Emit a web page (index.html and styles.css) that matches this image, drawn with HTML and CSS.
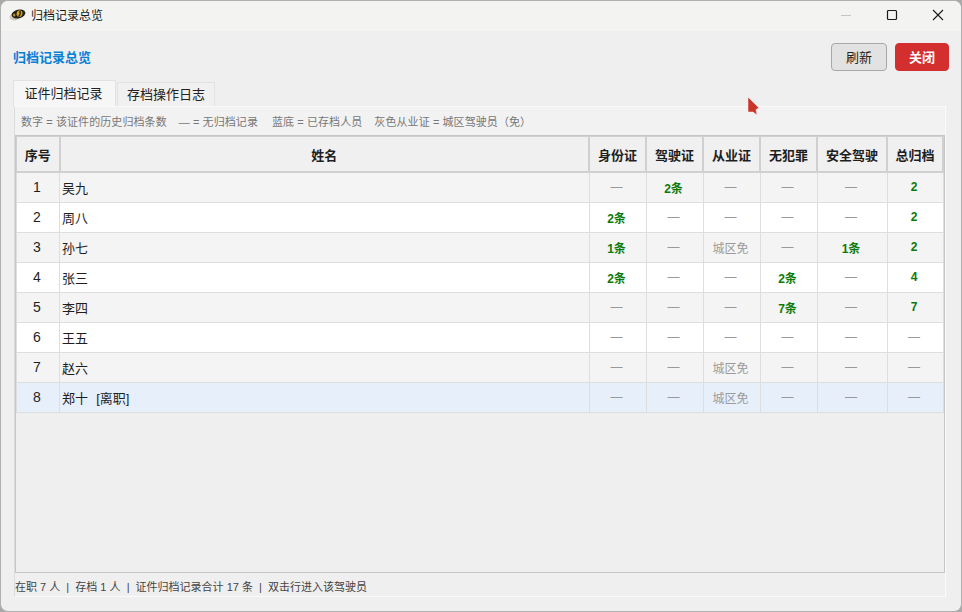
FILE: index.html
```html
<!DOCTYPE html>
<html lang="zh-CN">
<head>
    <meta charset="UTF-8">
    <title>归档记录总览</title>
    <link rel="stylesheet" href="styles.css">
</head>
<body>

<div class="window">
    <div class="titlebar">
        <svg class="app-icon" width="17" height="12" viewBox="0 0 17 12">
            <ellipse cx="6" cy="7.500" rx="5.500" ry="3.800" fill="#cfcbbf" transform="rotate(-15 6 7.500)"/>
            <ellipse cx="9.500" cy="5" rx="7" ry="4.300" fill="#23211c" transform="rotate(-15 9.500 5)"/>
            <ellipse cx="10.500" cy="4.600" rx="2.900" ry="3.300" fill="#d9a21e" transform="rotate(15 10.500 4.600)"/>
            <ellipse cx="5.200" cy="6" rx="1.300" ry="1.600" fill="#b58a24"/>
            <path d="M10.800 1.800c0.800 1.800 0.400 4-1.200 5.800" fill="none" stroke="#1d1a12" stroke-width="1.300"/>
        </svg>
        <span class="window-title">归档记录总览</span>
        <div class="window-controls">
            <svg width="12" height="12" viewBox="0 0 12 12"><path d="M1 6.500h10" stroke="#c4c4c4" stroke-width="1"/></svg>
            <svg width="12" height="12" viewBox="0 0 12 12"><rect x="1.500" y="1.500" width="9" height="9" rx="1" fill="none" stroke="#1a1a1a" stroke-width="1.200"/></svg>
            <svg width="12" height="12" viewBox="0 0 12 12"><path d="M1 1l10 10M11 1L1 11" stroke="#1a1a1a" stroke-width="1.100"/></svg>
        </div>
    </div>

    <div class="content">
        <div class="page-head">
            <h1>归档记录总览</h1>
            <div class="actions">
                <button class="btn">刷新</button>
                <button class="btn btn-close">关闭</button>
            </div>
        </div>

        <div class="tabs">
            <div class="tab active">证件归档记录</div>
            <div class="tab">存档操作日志</div>
        </div>

        <div class="pane">
            <div class="legend">
                <span>数字 = 该证件的历史归档条数</span>
                <span class="legend-nil">— = 无归档记录</span>
                <span>蓝底 = 已存档人员</span>
                <span>灰色从业证 = 城区驾驶员（免）</span>
            </div>

            <div class="table-box">
                <table>
                    <colgroup>
                        <col class="c-no"><col>
                        <col class="c-doc"><col class="c-doc"><col class="c-doc"><col class="c-doc">
                        <col class="c-safe"><col class="c-total">
                    </colgroup>
                    <thead>
                        <tr>
                            <th>序号</th><th>姓名</th><th>身份证</th><th>驾驶证</th>
                            <th>从业证</th><th>无犯罪</th><th>安全驾驶</th><th>总归档</th>
                        </tr>
                    </thead>
                    <tbody>
                        <tr class="odd">
                            <td class="no">1</td><td class="name">吴九</td>
                            <td class="nil">—</td><td class="num">2条</td><td class="nil">—</td><td class="nil">—</td><td class="nil">—</td><td class="num">2</td>
                        </tr>
                        <tr>
                            <td class="no">2</td><td class="name">周八</td>
                            <td class="num">2条</td><td class="nil">—</td><td class="nil">—</td><td class="nil">—</td><td class="nil">—</td><td class="num">2</td>
                        </tr>
                        <tr class="odd">
                            <td class="no">3</td><td class="name">孙七</td>
                            <td class="num">1条</td><td class="nil">—</td><td class="free">城区免</td><td class="nil">—</td><td class="num">1条</td><td class="num">2</td>
                        </tr>
                        <tr>
                            <td class="no">4</td><td class="name">张三</td>
                            <td class="num">2条</td><td class="nil">—</td><td class="nil">—</td><td class="num">2条</td><td class="nil">—</td><td class="num">4</td>
                        </tr>
                        <tr class="odd">
                            <td class="no">5</td><td class="name">李四</td>
                            <td class="nil">—</td><td class="nil">—</td><td class="nil">—</td><td class="num">7条</td><td class="nil">—</td><td class="num">7</td>
                        </tr>
                        <tr>
                            <td class="no">6</td><td class="name">王五</td>
                            <td class="nil">—</td><td class="nil">—</td><td class="nil">—</td><td class="nil">—</td><td class="nil">—</td><td class="nil">—</td>
                        </tr>
                        <tr class="odd">
                            <td class="no">7</td><td class="name">赵六</td>
                            <td class="nil">—</td><td class="nil">—</td><td class="free">城区免</td><td class="nil">—</td><td class="nil">—</td><td class="nil">—</td>
                        </tr>
                        <tr class="archived">
                            <td class="no">8</td><td class="name">郑十&nbsp; <span class="left-tag">[离职]</span></td>
                            <td class="nil">—</td><td class="nil">—</td><td class="free">城区免</td><td class="nil">—</td><td class="nil">—</td><td class="nil">—</td>
                        </tr>
                    </tbody>
                </table>
            </div>

            <div class="status">在职 7 人 &nbsp;|&nbsp; 存档 1 人 &nbsp;|&nbsp; 证件归档记录合计 17 条 &nbsp;|&nbsp; 双击行进入该驾驶员</div>
        </div>

        <svg class="cursor" width="14" height="20" viewBox="0 0 14 20">
            <path d="M1 1l11 11-3 1.500 1 5.500-4-3-5 0z" fill="#cb3527" stroke="#f4f4f4" stroke-width="0.500"/>
        </svg>
    </div>
</div>

</body>
</html>
```

FILE: styles.css
```css
html, body {
    margin: 0;
    height: 100%;
    background-color: #a9a9a9;
}
body {
    font-family: "Liberation Sans", "Noto Sans CJK SC", sans-serif;
    font-size: 12px;
    color: #1e1e1e;
    overflow: hidden;
}
.window {
    box-sizing: border-box;
    width: 962px;
    height: 612px;
    display: flex;
    flex-direction: column;
    background-color: #efefef;
    border: 1px solid #b0b0b0;
    border-radius: 8px;
    overflow: hidden;
}
.titlebar {
    box-sizing: border-box;
    display: flex;
    align-items: center;
    flex: 0 0 30px;
    padding: 0 0 3px 8px;
    background-color: #f3f3f1;
}
.app-icon {
    margin-right: 5px;
}
.window-title {
    font-size: 12px;
    color: #1a1a1a;
}
.window-controls {
    margin-left: auto;
    display: flex;
    gap: 34px;
    padding-right: 17px;
}
.content {
    position: relative;
    flex: 1;
    display: flex;
    flex-direction: column;
    padding: 12px 12px 14px 12px;
    min-height: 0;
}
.page-head {
    display: flex;
    justify-content: space-between;
    align-items: center;
    height: 28px;
}
.page-head h1 {
    margin: 0;
    padding-bottom: 2px;
    font-size: 13px;
    font-weight: bold;
    color: #0a7fd6;
}
.actions {
    display: flex;
    gap: 8px;
}
.btn {
    width: 56px;
    height: 28px;
    padding: 0 0 2px;
    font-family: inherit;
    font-size: 13px;
    color: #222;
    background-color: #e2e2e2;
    border: 1px solid #a8a8a8;
    border-radius: 4px;
}
.btn-close {
    width: 54px;
    font-weight: bold;
    color: #fff;
    background-color: #d32f2f;
    border-color: #d32f2f;
}
.tabs {
    display: flex;
    align-items: flex-end;
    gap: 1px;
    height: 26px;
    margin-top: 9px;
    position: relative;
    z-index: 1;
}
.tab {
    box-sizing: border-box;
    width: 98px;
    height: 24px;
    line-height: 23px;
    text-align: center;
    font-size: 13px;
    color: #222;
    background-color: #f0f0f0;
    border: 1px solid #e2e2e2;
    border-bottom: none;
}
.tab.active {
    width: 103px;
    height: 26px;
    padding-right: 2px;
    line-height: 25px;
    background-color: #f6f6f6;
}
.pane {
    flex: 1;
    display: flex;
    flex-direction: column;
    min-height: 0;
    margin: 0 3px 0 1px;
    border: 1px solid #fafafa;
    border-left-color: #dcdcdc;
}
.legend {
    display: flex;
    gap: 12px;
    height: 28px;
    align-items: center;
    padding-left: 6px;
    font-size: 11px;
    letter-spacing: 0.08px;
    color: #777;
    background-color: #f2f2f2;
}
.legend-nil {
    margin-right: 2px;
}
.table-box {
    flex: 1;
    border: 1px solid #c6c6c6;
    min-height: 0;
}
table {
    width: 100%;
    table-layout: fixed;
    border-collapse: collapse;
}
.c-no { width: 43px; }
.c-doc { width: 57px; }
.c-safe { width: 70px; }
.c-total { width: 56px; }
th {
    height: 34px;
    padding: 0;
    font-size: 13px;
    font-weight: bold;
    color: #1e1e1e;
    background-color: #f0f0f0;
    border: 2px solid #d0d0d0;
    border-width: 1px 2px 2px 1px;
}
td {
    height: 28px;
    padding: 0 2px 1px 0;
    text-align: center;
    background-color: #fff;
    border: 1px solid #dedede;
    border-width: 0 1px 1px 0;
    border-left: 1px solid #dedede;
}
tr.odd td {
    background-color: #f4f4f4;
}
tr.archived td {
    background-color: #e7effb;
}
td.no {
    font-size: 14px;
}
td.name {
    text-align: left;
    padding-left: 2px;
    font-size: 13px;
}
.left-tag {
    margin-left: 1px;
}
td.num {
    font-weight: bold;
    color: #0b7a0b;
}
td.nil {
    color: #999;
}
td.free {
    color: #9a9a9a;
}
.status {
    height: 23px;
    line-height: 29px;
    font-size: 11px;
    color: #444;
}
.cursor {
    position: absolute;
    left: 746px;
    top: 65px;
}
```
